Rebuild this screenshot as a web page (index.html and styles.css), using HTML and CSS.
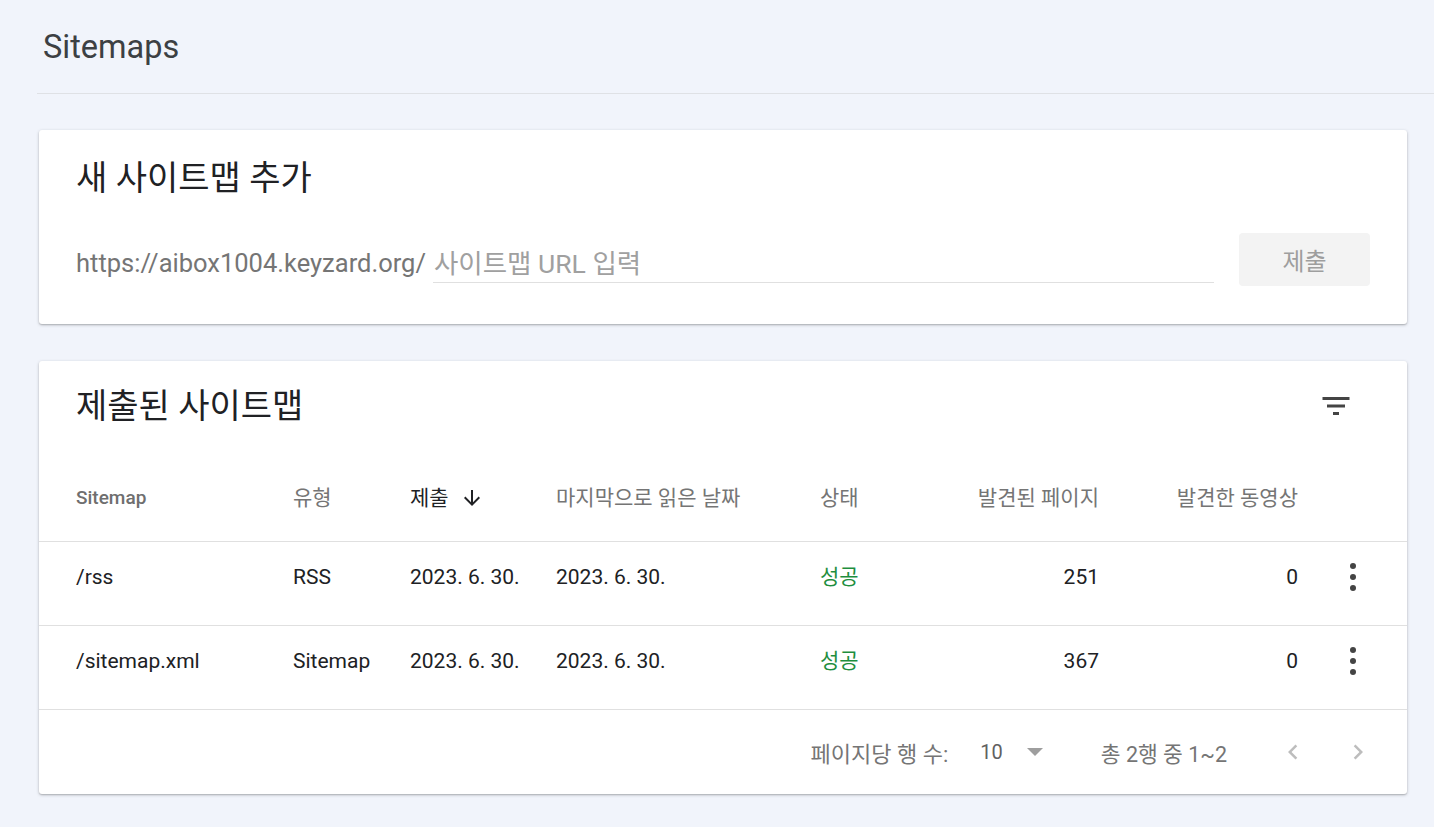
FILE: index.html
```html
<!DOCTYPE html>
<html lang="ko">
<head>
<meta charset="utf-8">
<title>Sitemaps</title>
<link rel="stylesheet" href="styles.css">
</head>
<body>
<div class="page">
  <header class="page-header">
    <h1 class="page-title">Sitemaps</h1>
  </header>

  <section class="card add-card">
    <h2 class="card-title">새 사이트맵 추가</h2>
    <div class="add-row">
      <span class="url-prefix">https://aibox1004.keyzard.org/</span>
      <input class="url-input" type="text" placeholder="사이트맵 URL 입력">
      <button class="submit-btn" type="button">제출</button>
    </div>
  </section>

  <section class="card list-card">
    <div class="list-head">
      <h2 class="card-title">제출된 사이트맵</h2>
      <svg class="filter-icon" viewBox="0 0 24 24" width="36" height="36" aria-hidden="true">
        <path d="M10 18h4v-2h-4v2zM3 6v2h18V6H3zm3 7h12v-2H6v2z" fill="#444"/>
      </svg>
    </div>

    <div class="row row-head">
      <div class="cell th th-strong">Sitemap</div>
      <div class="cell th">유형</div>
      <div class="cell th th-active">제출
        <svg class="sort-icon" viewBox="0 0 24 24" width="24" height="24" aria-hidden="true">
          <path d="M20 12l-1.41-1.41L13 16.17V4h-2v12.17l-5.58-5.59L4 12l8 8 8-8z" fill="#202124"/>
        </svg>
      </div>
      <div class="cell th">마지막으로 읽은 날짜</div>
      <div class="cell th">상태</div>
      <div class="cell th num">발견된 페이지</div>
      <div class="cell th num">발견한 동영상</div>
      <div class="cell"></div>
    </div>

    <div class="row">
      <div class="cell">/rss</div>
      <div class="cell">RSS</div>
      <div class="cell">2023. 6. 30.</div>
      <div class="cell">2023. 6. 30.</div>
      <div class="cell ok">성공</div>
      <div class="cell num">251</div>
      <div class="cell num">0</div>
      <div class="cell menu">
        <svg viewBox="0 0 8 30" width="8" height="30" aria-hidden="true">
          <circle cx="4" cy="4" r="3" fill="#444"/>
          <circle cx="4" cy="15" r="3" fill="#444"/>
          <circle cx="4" cy="26" r="3" fill="#444"/>
        </svg>
      </div>
    </div>

    <div class="row">
      <div class="cell">/sitemap.xml</div>
      <div class="cell">Sitemap</div>
      <div class="cell">2023. 6. 30.</div>
      <div class="cell">2023. 6. 30.</div>
      <div class="cell ok">성공</div>
      <div class="cell num">367</div>
      <div class="cell num">0</div>
      <div class="cell menu">
        <svg viewBox="0 0 8 30" width="8" height="30" aria-hidden="true">
          <circle cx="4" cy="4" r="3" fill="#444"/>
          <circle cx="4" cy="15" r="3" fill="#444"/>
          <circle cx="4" cy="26" r="3" fill="#444"/>
        </svg>
      </div>
    </div>

    <div class="pager">
      <span class="pager-label">페이지당 행 수:</span>
      <span class="pager-size">10</span>
      <span class="pager-caret"></span>
      <span class="pager-range">총 2행 중 1~2</span>
      <svg class="pager-nav" viewBox="0 0 24 24" width="30" height="30" aria-hidden="true">
        <path d="M15.41 7.41L14 6l-6 6 6 6 1.41-1.41L10.83 12z" fill="#bdbdbd"/>
      </svg>
      <svg class="pager-nav next" viewBox="0 0 24 24" width="30" height="30" aria-hidden="true">
        <path d="M10 6L8.59 7.41 13.17 12l-4.58 4.59L10 18l6-6z" fill="#bdbdbd"/>
      </svg>
    </div>
  </section>
</div>
</body>
</html>
```

FILE: styles.css
```css
* {
  box-sizing: border-box;
}

html, body {
  margin: 0;
  padding: 0;
}

body {
  background: #f1f4fb;
  font-family: Roboto, "Noto Sans CJK KR", sans-serif;
  color: #202124;
  height: 827px;
  overflow: hidden;
}

.page {
  padding-left: 37px;
}

/* top title bar with divider */
.page-header {
  height: 94px;
  border-bottom: 1px solid #dfe1e5;
  padding: 27px 0 0 6px;
}

.page-title {
  margin: 0;
  font-weight: 400;
  font-size: 32.5px;
  line-height: 40px;
  color: #3c4043;
}

/* cards */
.card {
  background: #fff;
  border-radius: 3px;
  box-shadow: 0 1px 3px rgba(60, 64, 67, 0.35), 0 1px 1px rgba(60, 64, 67, 0.12);
  margin: 0 27px 0 2px;
}

.card-title {
  margin: 0;
  font-weight: 400;
  font-size: 34px;
  line-height: 40px;
  color: #202124;
}

.add-card {
  margin-top: 36px;
  padding: 28px 37px 38px 37px;
}

.add-row {
  display: flex;
  align-items: flex-start;
  margin-top: 35px;
  height: 53px;
}

.url-prefix {
  font-size: 25.5px;
  line-height: 32px;
  margin-top: 14px;
  color: #757575;
  white-space: nowrap;
}

.url-input {
  flex: 1;
  min-width: 0;
  height: 50px;
  margin: 0 25px 0 7px;
  padding: 14px 0 3px 1px;
  border: none;
  border-bottom: 1px solid #e0e0e0;
  outline: none;
  background: transparent;
  font-family: inherit;
  font-size: 26.5px;
  line-height: 32px;
  color: #202124;
}

.url-input::placeholder {
  color: #a0a0a0;
}

.submit-btn {
  width: 131px;
  height: 53px;
  border: none;
  border-radius: 4px;
  background: #f3f3f3;
  color: #9e9e9e;
  font-family: inherit;
  font-size: 24px;
  padding: 0;
}

.list-card {
  margin-top: 37px;
}

.list-head {
  display: flex;
  align-items: center;
  justify-content: space-between;
  height: 66px;
  padding: 24px 53px 0 37px;
}

.list-head .card-title {
  line-height: 42px;
}

.filter-icon {
  display: block;
}

/* table rows */
.row {
  display: grid;
  grid-template-columns: 217px 117px 146px 264px 120px 159px 199px 1fr;
  align-items: center;
  height: 84px;
  padding: 14px 0 27px 37px;
  border-bottom: 1px solid #e0e0e0;
  font-size: 21px;
  line-height: 42px;
  color: #202124;
}

.row-head {
  height: 115px;
  padding-top: 50px;
  padding-bottom: 22px;
}

.cell {
  white-space: nowrap;
}

.th {
  font-size: 21px;
  color: #757575;
}

.th-strong {
  font-size: 19px;
  font-weight: 500;
  color: #6f6f6f;
}

.th-active {
  display: flex;
  align-items: center;
  color: #202124;
}

.sort-icon {
  margin-left: 11px;
}

.num {
  text-align: right;
}

.ok {
  color: #1e8e3e;
}

.menu {
  display: flex;
  justify-content: center;
  align-items: center;
}

.menu svg {
  display: block;
}

/* pagination footer */
.pager {
  display: flex;
  align-items: center;
  justify-content: flex-end;
  height: 84px;
  padding-right: 34px;
  font-size: 22px;
  color: #757575;
}

.pager-size {
  margin-left: 32px;
  font-size: 20px;
  color: #616161;
}

.pager-caret {
  margin-left: 24px;
  width: 0;
  height: 0;
  border-left: 8px solid transparent;
  border-right: 8px solid transparent;
  border-top: 8px solid #9e9e9e;
}

.pager-range {
  margin-left: 58px;
  font-size: 21.5px;
}

.pager-nav {
  display: block;
  margin-left: 51px;
}

.pager-nav.next {
  margin-left: 35px;
}
```
